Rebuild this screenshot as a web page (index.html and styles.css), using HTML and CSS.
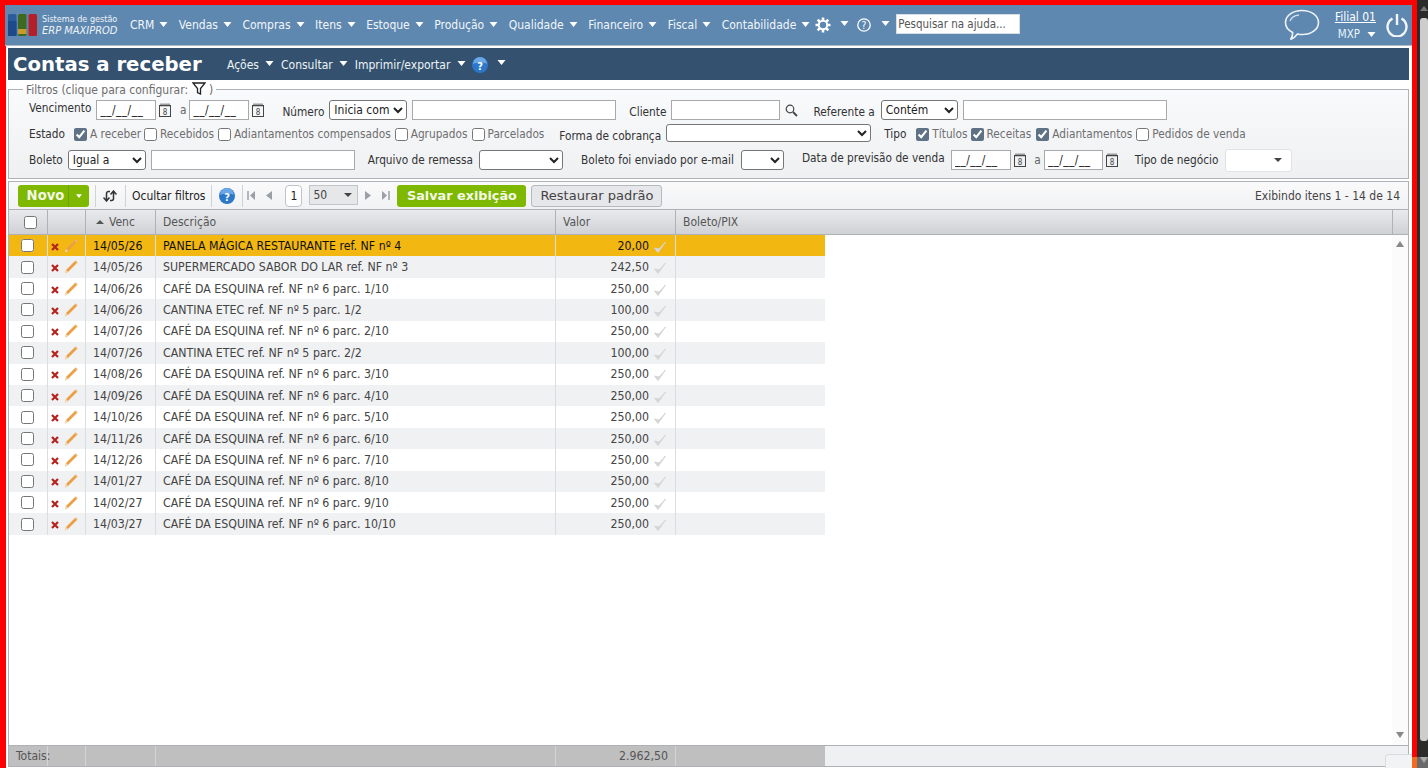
FILE: index.html
```html
<!DOCTYPE html>
<html lang="pt-BR">
<head>
<meta charset="utf-8">
<title>Contas a receber</title>
<link rel="stylesheet" href="styles.css">
</head>
<body>
<svg class="sprite" width="0" height="0" aria-hidden="true">
  <symbol id="x" viewBox="0 0 8 8"><path d="M1 1l6 6M7 1l-6 6" stroke="#b5231f" stroke-width="2.2"/></symbol>
  <symbol id="pen" viewBox="0 0 14 14"><path d="M11.500 0.500l2 2-9.500 9.500-3 1.500 1-3.500z" fill="#ec9f45"/><path d="M11.500 0.500l2 2-1 1-2-2z" fill="#eab77a"/><path d="M1 13.500l1-3.500 2 2z" fill="#f3dfc0"/></symbol>
  <symbol id="chk" viewBox="0 0 14 14"><path d="M1.500 8l3.500 4.500 7.500-10.500-6.500 7z" fill="#d6d6d6" stroke="#d6d6d6" stroke-linejoin="round"/></symbol>
  <symbol id="caret" viewBox="0 0 8 5"><path d="M0 0h8l-4 5z" fill="#fff"/></symbol>
  <symbol id="calframe" viewBox="0 0 12 14"><rect x="0.5" y="2.5" width="11" height="11" fill="none" stroke="#444"/><path d="M2 0.5v3M4 0.5v3M6 0.5v3M8 0.5v3M10 0.5v3" stroke="#444"/></symbol>
  <symbol id="helpball" viewBox="0 0 16 16"><circle cx="8" cy="8" r="8" fill="#2c77c9"/><path d="M1 7a7 7 0 0 1 14 0c-3-2-10-2-14 0z" fill="#6ba6e6"/></symbol>
</svg>

<div class="frame">
  <header class="nav">
    <div class="logo">
      <svg class="logo-mark" width="29" height="22" viewBox="0 0 29 22"><rect x="0" y="0" width="8.500" height="22" rx="1.500" fill="#2c5c9c"/><rect x="0" y="7" width="8.500" height="15" fill="#1f4a8a"/><rect x="10" y="0" width="8.500" height="22" rx="1.500" fill="#3e6a20"/><rect x="10" y="15" width="8.500" height="5" fill="#c99a2e"/><rect x="20.500" y="0" width="8.500" height="22" rx="1.500" fill="#b3202a"/></svg>
      <div class="logo-text"><span class="logo-top">Sistema de gestão</span><span class="logo-bottom">ERP MAXIPROD</span></div>
    </div>
    <nav class="menu">
      <a class="menu-item">CRM<svg class="caret"><use href="#caret"/></svg></a>
      <a class="menu-item">Vendas<svg class="caret"><use href="#caret"/></svg></a>
      <a class="menu-item">Compras<svg class="caret"><use href="#caret"/></svg></a>
      <a class="menu-item">Itens<svg class="caret"><use href="#caret"/></svg></a>
      <a class="menu-item">Estoque<svg class="caret"><use href="#caret"/></svg></a>
      <a class="menu-item">Produção<svg class="caret"><use href="#caret"/></svg></a>
      <a class="menu-item">Qualidade<svg class="caret"><use href="#caret"/></svg></a>
      <a class="menu-item">Financeiro<svg class="caret"><use href="#caret"/></svg></a>
      <a class="menu-item">Fiscal<svg class="caret"><use href="#caret"/></svg></a>
      <a class="menu-item">Contabilidade<svg class="caret"><use href="#caret"/></svg></a>
    </nav>
    <svg class="gear" width="16" height="16" viewBox="0 0 16 16"><g stroke="#fff" stroke-width="2.600"><path d="M8 0.500v15M0.500 8h15M2.700 2.700l10.600 10.600M13.300 2.700l-10.600 10.600"/></g><circle cx="8" cy="8" r="4.200" fill="#5e88b0" stroke="#fff" stroke-width="2"/></svg>
    <svg class="caret caret-gear"><use href="#caret"/></svg>
    <svg class="qmark" width="14" height="14" viewBox="0 0 14 14"><circle cx="7" cy="7" r="6.200" fill="none" stroke="#fff" stroke-width="1.300"/><text x="7" y="10.600" font-size="10" text-anchor="middle" fill="#fff" font-family="DejaVu Sans">?</text></svg>
    <svg class="caret caret-q"><use href="#caret"/></svg>
    <input class="help-search" type="text" value="Pesquisar na ajuda...">
    <div class="nav-right">
      <svg class="chat" width="36" height="32" viewBox="0 0 36 32"><path d="M18 1.500c9 0 16.500 5 16.500 12s-7.500 12-16 12c-2 0-3.500-.2-5-.6-1.500 2-3.500 4-7 5.600 1.500-2 2.200-4 2.200-7C3.500 21 1.500 17.500 1.500 13.500c0-7 7.500-12 16.500-12z" fill="none" stroke="#eef3f8" stroke-width="1.600"/><path d="M6 12c1-3 4-5.500 9-6" fill="none" stroke="#cfdde9" stroke-width="1.300"/></svg>
      <div class="branch"><a class="branch-name">Filial 01</a><span class="branch-user">MXP<svg class="caret"><use href="#caret"/></svg></span></div>
      <svg class="power" width="22" height="24" viewBox="0 0 22 24"><path d="M6.500 5.500a9.500 9.500 0 1 0 9 0" fill="none" stroke="#f3f6f9" stroke-width="2.400"/><path d="M11 1v11" stroke="#f3f6f9" stroke-width="2.400"/></svg>
    </div>
  </header>

  <main class="content">
    <div class="titlebar">
      <h1 class="page-title">Contas a receber</h1>
      <a class="title-menu">Ações<svg class="caret"><use href="#caret"/></svg></a>
      <a class="title-menu">Consultar<svg class="caret"><use href="#caret"/></svg></a>
      <a class="title-menu">Imprimir/exportar<svg class="caret"><use href="#caret"/></svg></a>
      <svg class="title-help" viewBox="0 0 16 16"><use href="#helpball"/><text x="8" y="12.500" font-size="11" font-weight="700" text-anchor="middle" fill="#fff" font-family="DejaVu Sans">?</text></svg>
      <svg class="caret title-help-caret"><use href="#caret"/></svg>
    </div>

    <fieldset class="filters">
      <legend class="filters-legend">Filtros (clique para configurar: <svg class="funnel" width="14" height="13" viewBox="0 0 14 13"><path d="M1 1h12L8.500 6.500V12l-3-1.500v-4z" fill="none" stroke="#222" stroke-width="1.300"/></svg> )</legend>
      <div class="f-row f-row1">
        <span class="lbl high m29">Vencimento</span>
        <input class="inp w60 ml5" value="__/__/__"><svg class="cal" viewBox="0 0 12 14"><use href="#calframe"/><text x="6" y="12" font-size="8" text-anchor="middle" fill="#444" font-family="DejaVu Sans">8</text></svg>
        <span class="sep-a">a</span>
        <input class="inp w60" value="__/__/__"><svg class="cal" viewBox="0 0 12 14"><use href="#calframe"/><text x="6" y="12" font-size="8" text-anchor="middle" fill="#444" font-family="DejaVu Sans">8</text></svg>
        <span class="lbl low ml18">Número</span>
        <select class="sel w78 ml5"><option>Inicia com</option></select>
        <input class="inp w204 ml5">
        <span class="lbl low ml13">Cliente</span>
        <input class="inp w109 ml5">
        <svg class="search" width="13" height="13" viewBox="0 0 13 13"><circle cx="5" cy="5" r="3.800" fill="none" stroke="#444" stroke-width="1.200"/><path d="M8 8l4 4" stroke="#444" stroke-width="1.800"/></svg>
        <span class="lbl low ml15">Referente a</span>
        <select class="sel w77 ml6"><option>Contém</option></select>
        <input class="inp w204 ml5">
      </div>
      <div class="f-row f-row2">
        <span class="lbl m29">Estado</span>
        <label class="chk ml9"><input type="checkbox" checked>A receber</label>
        <label class="chk ml3"><input type="checkbox">Recebidos</label>
        <label class="chk ml4"><input type="checkbox">Adiantamentos compensados</label>
        <label class="chk ml4"><input type="checkbox">Agrupados</label>
        <label class="chk ml4"><input type="checkbox">Parcelados</label>
        <span class="lbl low ml15">Forma de cobrança</span>
        <select class="sel w205 sel-short ml5"><option></option></select>
        <span class="lbl ml13">Tipo</span>
        <label class="chk ml10"><input type="checkbox" checked>Títulos</label>
        <label class="chk ml3"><input type="checkbox" checked>Receitas</label>
        <label class="chk ml5"><input type="checkbox" checked>Adiantamentos</label>
        <label class="chk ml4"><input type="checkbox">Pedidos de venda</label>
      </div>
      <div class="f-row f-row3">
        <span class="lbl m29">Boleto</span>
        <select class="sel w78 ml5"><option>Igual a</option></select>
        <input class="inp w204 ml5">
        <span class="lbl ml13">Arquivo de remessa</span>
        <select class="sel w84 ml6"><option></option></select>
        <span class="lbl ml18">Boleto foi enviado por e-mail</span>
        <select class="sel w43 ml7"><option></option></select>
        <span class="lbl high ml18">Data de previsão de venda</span>
        <input class="inp w60 ml6" value="__/__/__"><svg class="cal" viewBox="0 0 12 14"><use href="#calframe"/><text x="6" y="12" font-size="8" text-anchor="middle" fill="#444" font-family="DejaVu Sans">8</text></svg>
        <span class="sep-a">a</span>
        <input class="inp w59" value="__/__/__"><svg class="cal" viewBox="0 0 12 14"><use href="#calframe"/><text x="6" y="12" font-size="8" text-anchor="middle" fill="#444" font-family="DejaVu Sans">8</text></svg>
        <span class="lbl ml17">Tipo de negócio</span>
        <div class="combo ml7"><span class="combo-arrow"></span></div>
      </div>
    </fieldset>

    <section class="grid">
      <div class="toolbar">
        <div class="btn-novo"><span class="btn-novo-label">Novo</span><span class="btn-novo-drop"><svg class="caret caret-novo"><use href="#caret"/></svg></span></div>
        <span class="tb-sep"></span>
        <svg class="refresh" width="14" height="12" viewBox="0 0 14 12"><path d="M3.500 11V3.500a2 2 0 0 1 2-2h1.500M0.500 7.500l3 3.500 3-3.500M10.500 1v7.500a2 2 0 0 1-2 2H7M7.500 4.500l3-3.500 3 3.500" fill="none" stroke="#333" stroke-width="1.500"/></svg>
        <span class="tb-sep"></span>
        <span class="tb-text">Ocultar filtros</span>
        <span class="tb-sep tb-sep-b"></span>
        <svg class="tb-help" viewBox="0 0 16 16"><use href="#helpball"/><text x="8" y="12.500" font-size="11" font-weight="700" text-anchor="middle" fill="#fff" font-family="DejaVu Sans">?</text></svg>
        <span class="tb-sep tb-sep-c"></span>
        <svg class="pg pg-first" width="8" height="9" viewBox="0 0 8 9"><path d="M1 0v9" stroke="#9aa0a6" stroke-width="1.500"/><path d="M8 0v9L3 4.500z" fill="#9aa0a6"/></svg>
        <svg class="pg pg-prev" width="6" height="9" viewBox="0 0 6 9"><path d="M6 0v9L0 4.500z" fill="#9aa0a6"/></svg>
        <span class="pg-input">1</span>
        <div class="pg-size"><span>50</span><span class="combo-arrow"></span></div>
        <svg class="pg pg-next" width="6" height="9" viewBox="0 0 6 9"><path d="M0 0v9l6-4.500z" fill="#9aa0a6"/></svg>
        <svg class="pg pg-last" width="8" height="9" viewBox="0 0 8 9"><path d="M0 0v9l5-4.500z" fill="#9aa0a6"/><path d="M7 0v9" stroke="#9aa0a6" stroke-width="1.500"/></svg>
        <button class="btn-save" type="button">Salvar exibição</button>
        <button class="btn-restore" type="button">Restaurar padrão</button>
        <span class="tb-info">Exibindo itens 1 - 14 de 14</span>
      </div>

      <div class="thead">
        <div class="th th-c"><input type="checkbox"></div>
        <div class="th"></div>
        <div class="th"><span class="sort-up"></span>Venc</div>
        <div class="th">Descrição</div>
        <div class="th">Valor</div>
        <div class="th">Boleto/PIX</div>
        <div class="th th-fill"></div>
        <div class="th th-end"></div>
      </div>

      <div class="tbody">
        <div class="rows">
          <div class="row row-sel"><div class="td td-c"><input type="checkbox"></div><div class="td td-act"><svg class="ic-x"><use href="#x"/></svg><svg class="ic-pen"><use href="#pen"/></svg></div><div class="td">14/05/26</div><div class="td">PANELA MÁGICA RESTAURANTE ref. NF nº 4</div><div class="td td-val">20,00<svg class="ic-chk"><use href="#chk"/></svg></div><div class="td"></div></div>
          <div class="row row-alt"><div class="td td-c"><input type="checkbox"></div><div class="td td-act"><svg class="ic-x"><use href="#x"/></svg><svg class="ic-pen"><use href="#pen"/></svg></div><div class="td">14/05/26</div><div class="td">SUPERMERCADO SABOR DO LAR ref. NF nº 3</div><div class="td td-val">242,50<svg class="ic-chk"><use href="#chk"/></svg></div><div class="td"></div></div>
          <div class="row"><div class="td td-c"><input type="checkbox"></div><div class="td td-act"><svg class="ic-x"><use href="#x"/></svg><svg class="ic-pen"><use href="#pen"/></svg></div><div class="td">14/06/26</div><div class="td">CAFÉ DA ESQUINA ref. NF nº 6 parc. 1/10</div><div class="td td-val">250,00<svg class="ic-chk"><use href="#chk"/></svg></div><div class="td"></div></div>
          <div class="row row-alt"><div class="td td-c"><input type="checkbox"></div><div class="td td-act"><svg class="ic-x"><use href="#x"/></svg><svg class="ic-pen"><use href="#pen"/></svg></div><div class="td">14/06/26</div><div class="td">CANTINA ETEC ref. NF nº 5 parc. 1/2</div><div class="td td-val">100,00<svg class="ic-chk"><use href="#chk"/></svg></div><div class="td"></div></div>
          <div class="row"><div class="td td-c"><input type="checkbox"></div><div class="td td-act"><svg class="ic-x"><use href="#x"/></svg><svg class="ic-pen"><use href="#pen"/></svg></div><div class="td">14/07/26</div><div class="td">CAFÉ DA ESQUINA ref. NF nº 6 parc. 2/10</div><div class="td td-val">250,00<svg class="ic-chk"><use href="#chk"/></svg></div><div class="td"></div></div>
          <div class="row row-alt"><div class="td td-c"><input type="checkbox"></div><div class="td td-act"><svg class="ic-x"><use href="#x"/></svg><svg class="ic-pen"><use href="#pen"/></svg></div><div class="td">14/07/26</div><div class="td">CANTINA ETEC ref. NF nº 5 parc. 2/2</div><div class="td td-val">100,00<svg class="ic-chk"><use href="#chk"/></svg></div><div class="td"></div></div>
          <div class="row"><div class="td td-c"><input type="checkbox"></div><div class="td td-act"><svg class="ic-x"><use href="#x"/></svg><svg class="ic-pen"><use href="#pen"/></svg></div><div class="td">14/08/26</div><div class="td">CAFÉ DA ESQUINA ref. NF nº 6 parc. 3/10</div><div class="td td-val">250,00<svg class="ic-chk"><use href="#chk"/></svg></div><div class="td"></div></div>
          <div class="row row-alt"><div class="td td-c"><input type="checkbox"></div><div class="td td-act"><svg class="ic-x"><use href="#x"/></svg><svg class="ic-pen"><use href="#pen"/></svg></div><div class="td">14/09/26</div><div class="td">CAFÉ DA ESQUINA ref. NF nº 6 parc. 4/10</div><div class="td td-val">250,00<svg class="ic-chk"><use href="#chk"/></svg></div><div class="td"></div></div>
          <div class="row"><div class="td td-c"><input type="checkbox"></div><div class="td td-act"><svg class="ic-x"><use href="#x"/></svg><svg class="ic-pen"><use href="#pen"/></svg></div><div class="td">14/10/26</div><div class="td">CAFÉ DA ESQUINA ref. NF nº 6 parc. 5/10</div><div class="td td-val">250,00<svg class="ic-chk"><use href="#chk"/></svg></div><div class="td"></div></div>
          <div class="row row-alt"><div class="td td-c"><input type="checkbox"></div><div class="td td-act"><svg class="ic-x"><use href="#x"/></svg><svg class="ic-pen"><use href="#pen"/></svg></div><div class="td">14/11/26</div><div class="td">CAFÉ DA ESQUINA ref. NF nº 6 parc. 6/10</div><div class="td td-val">250,00<svg class="ic-chk"><use href="#chk"/></svg></div><div class="td"></div></div>
          <div class="row"><div class="td td-c"><input type="checkbox"></div><div class="td td-act"><svg class="ic-x"><use href="#x"/></svg><svg class="ic-pen"><use href="#pen"/></svg></div><div class="td">14/12/26</div><div class="td">CAFÉ DA ESQUINA ref. NF nº 6 parc. 7/10</div><div class="td td-val">250,00<svg class="ic-chk"><use href="#chk"/></svg></div><div class="td"></div></div>
          <div class="row row-alt"><div class="td td-c"><input type="checkbox"></div><div class="td td-act"><svg class="ic-x"><use href="#x"/></svg><svg class="ic-pen"><use href="#pen"/></svg></div><div class="td">14/01/27</div><div class="td">CAFÉ DA ESQUINA ref. NF nº 6 parc. 8/10</div><div class="td td-val">250,00<svg class="ic-chk"><use href="#chk"/></svg></div><div class="td"></div></div>
          <div class="row"><div class="td td-c"><input type="checkbox"></div><div class="td td-act"><svg class="ic-x"><use href="#x"/></svg><svg class="ic-pen"><use href="#pen"/></svg></div><div class="td">14/02/27</div><div class="td">CAFÉ DA ESQUINA ref. NF nº 6 parc. 9/10</div><div class="td td-val">250,00<svg class="ic-chk"><use href="#chk"/></svg></div><div class="td"></div></div>
          <div class="row row-alt"><div class="td td-c"><input type="checkbox"></div><div class="td td-act"><svg class="ic-x"><use href="#x"/></svg><svg class="ic-pen"><use href="#pen"/></svg></div><div class="td">14/03/27</div><div class="td">CAFÉ DA ESQUINA ref. NF nº 6 parc. 10/10</div><div class="td td-val">250,00<svg class="ic-chk"><use href="#chk"/></svg></div><div class="td"></div></div>
        </div>
        <div class="vscroll"><span class="arrow-up"></span><span class="arrow-down"></span></div>
      </div>

      <div class="tfoot">
        <div class="tf tf-label">Totais:</div>
        <div class="tf"></div>
        <div class="tf"></div>
        <div class="tf"></div>
        <div class="tf tf-val">2.962,50</div>
        <div class="tf"></div>
        <div class="tf-rest"></div>
      </div>
    </section>
  </main>
</div>
<aside class="page-scroll"><span class="ps-up"></span><span class="ps-thumb"></span></aside>
<div class="corner-widget"><span class="cw-box"></span><span class="cw-orange"></span><span class="cw-gray"><span class="cw-arrow"></span></span></div>
</body>
</html>
```

FILE: styles.css
```css
* { box-sizing: border-box; }
html, body { margin: 0; height: 100%; overflow: hidden; }
body {
  display: flex;
  background: #fff;
  font-family: "DejaVu Sans Condensed", "DejaVu Sans", sans-serif;
  font-stretch: condensed;
  font-size: 12px;
  color: #333;
}
.sprite { position: absolute; }
.caret { width: 9px; height: 5px; display: inline-block; flex: none; }

.frame {
  width: 1417px;
  height: 100vh;
  border: solid #f00;
  border-width: 5px 5px 0 5px;
  display: flex;
  flex-direction: column;
  background: #fff;
}
.page-scroll {
  width: 11px;
  padding-left: 3px;
  background: #2b2b2b;
  display: flex;
  flex-direction: column;
  align-items: center;
}
.ps-up { width: 0; height: 0; margin-top: 6px; border: 4px solid transparent; border-top: 0; border-bottom: 5px solid #777; flex: none; }
.ps-thumb { width: 8px; height: 723px; background: #cdcdcd; border-radius: 3px; margin-top: 7px; flex: none; }

.corner-widget { position: absolute; right: 0; bottom: 0; width: 43px; height: 14px; display: flex; }
.cw-box { position: absolute; left: 0; top: 0; width: 27px; height: 14px; border: 1px solid #d9dbde; border-radius: 4px 0 0 0; border-width: 1px 0 0 1px; background: #f2f3f5; }
.cw-orange { position: absolute; left: 27px; top: 3px; width: 5px; height: 11px; background: #f36a20; }
.cw-gray { position: absolute; left: 32px; top: 3px; width: 11px; height: 11px; background: #6a6a6a; display: flex; justify-content: center; padding-left: 2px; }
.cw-arrow { width: 0; height: 0; border: 4px solid transparent; border-bottom: 0; border-top: 6px solid #aaa; }

/* Top navigation */
.nav {
  height: 41px;
  flex: none;
  background: #5e88b0;
  border-bottom: 1px solid #b5bcc4;
  display: flex;
  align-items: center;
  color: #fff;
  padding: 0 0 0 3px;
}
.logo { display: flex; align-items: center; width: 122px; flex: none; }
.logo-mark { flex: none; }
.logo-text { display: flex; flex-direction: column; margin-left: 5px; line-height: 12px; }
.logo-top { font-size: 9px; color: #eef3f8; white-space: nowrap; }
.logo-bottom { font-size: 11px; font-style: italic; color: #eef3f8; white-space: nowrap; }
.menu { display: flex; flex: none; }
.menu-item { display: flex; align-items: center; color: #f2f6fa; font-size: 12px; }
.menu-item .caret { margin: -2px 10.500px 0 5px; }
.gear { margin-left: -5.500px; flex: none; }
.caret-gear { margin: -4px 0 0 9px; }
.qmark { margin-left: 8px; flex: none; }
.caret-q { margin: -4px 0 0 10px; }
.help-search {
  width: 124px;
  height: 20px;
  margin: -2px 0 0 6px;
  border: 1px solid #d8dde2;
  background: #fff;
  padding: 0 1px;
  font: inherit;
  font-stretch: condensed;
  font-size: 11.500px;
  color: #555;
  flex: none;
}
.nav-right { margin-left: auto; display: flex; align-items: center; padding-right: 4px; }
.chat { flex: none; }
.branch { display: flex; flex-direction: column; align-items: flex-end; margin-left: 14px; width: 42px; }
.branch-name { color: #fff; text-decoration: underline; white-space: nowrap; line-height: 16px; margin-top: 2px; }
.branch-user { color: #e8f3fa; white-space: nowrap; line-height: 18px; display: flex; align-items: center; gap: 7px; font-size: 11.500px; }
.power { margin-left: 10px; flex: none; }

/* Content */
.content {
  flex: 1;
  min-height: 0;
  display: flex;
  flex-direction: column;
  border-left: 1px solid #f00;
  padding: 2px 3px 1px 2px;
}
.titlebar {
  height: 32px;
  flex: none;
  background: #34526f;
  display: flex;
  align-items: center;
  color: #fff;
}
.page-title {
  margin: 0 0 0 5px;
  width: 214px;
  font-family: "DejaVu Sans", sans-serif;
  font-stretch: normal;
  font-size: 19.700px;
  font-weight: 700;
  white-space: nowrap;
}
.title-menu { display: flex; align-items: center; color: #eef2f6; margin-top: 1px; }
.title-menu .caret { margin: -3px 7px 0 6px; }
.title-menu:nth-of-type(3) .caret { margin-left: 7px; }
.title-help { width: 16px; height: 16px; margin-left: -1px; margin-top: 1px; }
.title-help-caret { margin: -4px 0 0 9px; }

/* Filters */
.filters {
  margin: 2px 0 0;
  padding: 0;
  flex: none;
  height: 97px;
  border: 1px solid #aeb2b6;
  background: linear-gradient(#f9fafc, #eff0f2);
  display: block;
  min-width: 0;
}
.filters-legend {
  margin-left: 14px;
  padding: 0 3px;
  color: #6d6d6d;
  font-size: 12px;
  line-height: 12px;
}
.funnel { vertical-align: -1px; }
.f-row { display: flex; align-items: center; white-space: nowrap; font-size: 11.750px; }
.f-row1 { height: 22px; margin-top: 3px; }
.f-row2 { height: 20px; margin-top: 3px; }
.f-row3 { height: 22px; margin-top: 5px; }
.lbl { color: #333; flex: none; }
.low { margin-top: 4px; }
.high { margin-top: -4px; }
.m29 { margin-left: 20px; }
.ml3 { margin-left: 3px; }
.ml4 { margin-left: 4px; }
.ml5 { margin-left: 5px; }
.ml6 { margin-left: 6px; }
.ml7 { margin-left: 7px; }
.ml9 { margin-left: 9px; }
.ml10 { margin-left: 10px; }
.ml13 { margin-left: 13px; }
.ml15 { margin-left: 15px; }
.ml17 { margin-left: 17px; }
.ml18 { margin-left: 18px; }
.inp {
  height: 20px;
  border: 1px solid #a9a9a9;
  background: #fff;
  padding: 0 3px;
  font: inherit;
  font-stretch: condensed;
  letter-spacing: 0.500px;
  color: #222;
  flex: none;
  border-radius: 0;
}
.w59 { width: 59px; }
.w60 { width: 60px; }
.w204 { width: 204px; }
.w109 { width: 109px; }
.sel {
  height: 20px;
  border: 1px solid #767676;
  border-radius: 3px;
  background: #fff;
  font: inherit;
  font-stretch: condensed;
  font-size: 12px;
  color: #222;
  padding: 0;
  flex: none;
}
.sel-short { height: 18px; margin-top: -2px; }
.w43 { width: 43px; }
.w77 { width: 77px; }
.w78 { width: 78px; }
.w84 { width: 84px; }
.w205 { width: 205px; }
.cal { width: 12px; height: 14px; margin-left: 3px; flex: none; }
.sep-a { width: 18px; text-align: right; padding-right: 3px; color: #666; flex: none; }
.search { margin-left: 5px; flex: none; }
.chk { display: flex; align-items: center; color: #6f6f6f; flex: none; }
.chk input { width: 13px; height: 13px; margin: 0 3px 0 0; accent-color: #5f7285; flex: none; }
.combo {
  width: 67px;
  height: 23px;
  background: #fff;
  border: 1px solid #e0e2e5;
  border-radius: 3px;
  display: flex;
  align-items: center;
  justify-content: flex-end;
  padding-right: 9px;
  flex: none;
}
.combo-arrow { width: 0; height: 0; border: 4px solid transparent; border-top: 4px solid #444; border-bottom: 0; flex: none; }

/* Grid */
.grid {
  flex: 1;
  min-height: 0;
  margin-top: 2px;
  border: solid #aeb2b6;
  border-width: 1px;
  display: flex;
  flex-direction: column;
}
.toolbar {
  height: 28px;
  flex: none;
  display: flex;
  align-items: center;
  background: linear-gradient(#fafafb, #f1f2f4);
  border-bottom: 1px solid #aeb2b6;
  padding-left: 9px;
}
.btn-novo {
  width: 71px;
  height: 22px;
  background: #7fb800;
  border-radius: 3px;
  display: flex;
  color: #f2f7e4;
  font-family: "DejaVu Sans", sans-serif;
  font-stretch: normal;
  font-weight: 700;
  font-size: 13.200px;
  flex: none;
}
.btn-novo-label { width: 51px; line-height: 22px; text-align: center; padding-left: 5px; border-right: 1px solid #6fa200; }
.btn-novo-drop { flex: 1; display: flex; align-items: center; justify-content: center; }
.caret-novo { width: 6px; height: 4px; }
.tb-sep { width: 1px; height: 22px; background: #cfd2d6; margin: 0 7px 0 6px; flex: none; }
.refresh { margin: 0 2px 0 0; flex: none; }
.tb-text { color: #222; font-size: 12px; flex: none; margin-left: -1px; }
.tb-sep-b { margin-left: 6px; }
.tb-help { width: 16px; height: 16px; flex: none; }
.tb-sep-c { margin: 0 0 0 7px; }
.pg { flex: none; }
.pg-first { margin-left: 4px; }
.pg-prev { margin-left: 11px; }
.pg-input {
  width: 17px;
  height: 22px;
  margin-left: 13px;
  background: #fff;
  border: 1px solid #bfc3c7;
  border-radius: 4px;
  display: flex;
  align-items: center;
  justify-content: center;
  color: #222;
  flex: none;
}
.pg-size {
  width: 49px;
  height: 20px;
  margin: -2px 0 0 7px;
  background: #e6e7e9;
  border: 1px solid #c2c5c9;
  display: flex;
  align-items: center;
  justify-content: space-between;
  padding: 0 5px 0 3px;
  color: #444;
  flex: none;
}
.pg-next { margin-left: 7px; }
.pg-last { margin-left: 11px; }
.btn-save {
  width: 129px;
  height: 22px;
  margin-left: 7px;
  border: 0;
  background: #7fb800;
  border-radius: 3px;
  color: #f4f8e8;
  font-family: "DejaVu Sans", sans-serif;
  font-weight: 700;
  font-size: 12.800px;
  padding: 0;
  flex: none;
}
.btn-restore {
  width: 131px;
  height: 22px;
  margin-left: 5px;
  border: 1px solid #b5b8bc;
  background: #e6e7ea;
  border-radius: 3px;
  color: #444;
  font-family: "DejaVu Sans", sans-serif;
  font-size: 13px;
  padding: 0;
  flex: none;
}
.tb-info { margin-left: auto; padding-right: 8px; color: #444; font-size: 12px; }

.thead {
  height: 25px;
  flex: none;
  display: grid;
  grid-template-columns: 39px 38px 70px 400px 120px 149px 1fr 15px;
  background: linear-gradient(#e9eaec, #cfd1d5);
  border-bottom: 1px solid #aeb2b6;
}
.th {
  display: flex;
  align-items: center;
  padding-left: 7px;
  border-right: 1px solid #aeb2b6;
  color: #555;
}
.th-c { justify-content: center; padding: 0 0 0 4px; }
.th-c input { margin: 0; width: 13px; height: 13px; }
.th-end { border-right: 0; }
.th:nth-child(6) { border-right: 0; }
.sort-up { width: 0; height: 0; border: 4px solid transparent; border-top: 0; border-bottom: 4px solid #555; margin: 0 5px 0 3px; }

.tbody { flex: 1; min-height: 0; display: flex; background: #fff; justify-content: space-between; }
.rows { display: grid; grid-template-rows: repeat(14, 21.430px); width: 816px; flex: none; align-content: start; }
.row { display: grid; grid-template-columns: 39px 38px 70px 400px 120px 149px; color: #444; background: #fff; font-size: 12.250px; }
.row-alt { background: #f0f1f3; }
.row-sel { background: #f2b711; color: #111; }
.td {
  display: flex;
  align-items: center;
  padding-left: 7px;
  border-right: 1px solid #dcdde0;
  white-space: nowrap;
  overflow: hidden;
}
.td:last-child { border-right: 0; }
.td-c { justify-content: center; padding: 0 1px 0 0; }
.td-c input { margin: 0; width: 13px; height: 13px; }
.td-act { padding-left: 3px; }
.td-val { justify-content: flex-end; padding: 0; }
.ic-x { width: 8px; height: 8px; margin-top: 2px; flex: none; }
.ic-pen { width: 14px; height: 14px; margin-left: 5px; flex: none; }
.ic-chk { width: 14px; height: 14px; margin: 2px 8px 0 4px; flex: none; }
.vscroll {
  width: 16px;
  background: #fbfbfb;
  display: flex;
  flex-direction: column;
  align-items: center;
  justify-content: space-between;
  padding: 6px 0 7px;
}
.arrow-up { width: 0; height: 0; border: 4px solid transparent; border-top: 0; border-bottom: 6px solid #888; }
.arrow-down { width: 0; height: 0; border: 4px solid transparent; border-bottom: 0; border-top: 6px solid #888; }

.tfoot {
  height: 21px;
  flex: none;
  display: grid;
  grid-template-columns: 39px 38px 70px 400px 120px 149px 1fr;
  background: #eff0f2;
  border-top: 1px solid #aeb2b6;
}
.tf {
  background: #bfbfbf;
  border-right: 1px solid #d4d4d4;
  padding-left: 7px;
  line-height: 20px;
  color: #555;
  white-space: nowrap;
}
.tf-label { position: relative; z-index: 1; background: #bfbfbf; }
.tf:nth-child(6) { border-right: 0; }
.tf-val { text-align: right; padding: 0 7px 0 0; font-size: 12.250px; }
.tf-rest { background: #eff0f2; }
```
